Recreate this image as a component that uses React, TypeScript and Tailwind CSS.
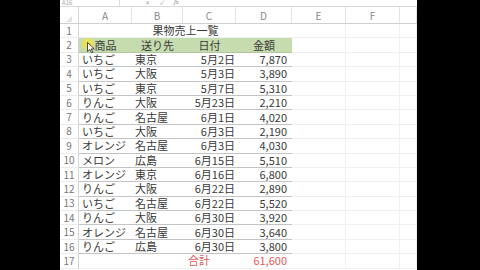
import React from 'react';

const rows = [
  ['いちご', '東京', '5月2日', '7,870'],
  ['いちご', '大阪', '5月3日', '3,890'],
  ['いちご', '東京', '5月7日', '5,310'],
  ['りんご', '大阪', '5月23日', '2,210'],
  ['りんご', '名古屋', '6月1日', '4,020'],
  ['いちご', '大阪', '6月3日', '2,190'],
  ['オレンジ', '名古屋', '6月3日', '4,030'],
  ['メロン', '広島', '6月15日', '5,510'],
  ['オレンジ', '東京', '6月16日', '6,800'],
  ['りんご', '大阪', '6月22日', '2,890'],
  ['いちご', '名古屋', '6月22日', '5,520'],
  ['りんご', '大阪', '6月30日', '3,920'],
  ['オレンジ', '名古屋', '6月30日', '3,640'],
  ['りんご', '広島', '6月30日', '3,800'],
];

const cols = 'grid grid-cols-[19px_53px_51px_53px_56px_54px_54px_17px]';
const font = { fontFamily: '"Noto Sans CJK JP", "Noto Sans", sans-serif' };

function RowNum({ n }: { n: number }) {
  return (
    <div className="flex items-center justify-center text-[10px] text-[#777] border-r border-[#d4d4d4] border-b border-b-[#ececec]">
      {n}
    </div>
  );
}

function Blank() {
  return <div className="border-r border-b border-[#f0f0f0]" />;
}

export default function App() {
  return (
    <div className="w-[480px] h-[270px] bg-black flex overflow-hidden leading-none" style={font}>
      <div className="w-[60px] shrink-0" />
      <div className="w-[357px] shrink-0 bg-white flex flex-col overflow-hidden">
        {/* formula bar, mostly cut off */}
        <div className="h-[7px] flex border-b border-[#d8d8d8] overflow-hidden">
          <div className="w-[60px] border-r border-[#dcdcdc] text-[6px] leading-[6px] text-[#aaa] pl-[2px]">A16</div>
          <div className="w-[15px]" />
          <div className="flex gap-[10px] items-start text-[6px] leading-[6px] text-[#aaa] pl-[10px]">
            <span>✕</span>
            <span>✓</span>
            <span className="italic font-serif text-[#888]">fx</span>
          </div>
        </div>
        {/* column header */}
        <div className={`${cols} h-[17px] border-b border-[#cfcfcf] text-[10px] text-[#888]`}>
          <div className="border-r border-[#d4d4d4] flex items-end justify-center pb-[1px]">
            <svg width="6" height="6" viewBox="0 0 6 6"><path d="M6 0 L6 6 L0 6 Z" fill="#e2e2e2" /></svg>
          </div>
          {['A', 'B', 'C', 'D', 'E', 'F', ''].map((c, i) => (
            <div key={i} className="flex items-center justify-center border-r border-[#e4e4e4] pt-[1px]">
              {c}
            </div>
          ))}
        </div>
        {/* row 1 */}
        <div className={`${cols} h-[14.4px] text-[11px] text-[#3a3a3a]`}>
          <RowNum n={1} />
          <div className="col-span-4 flex items-center justify-center border-b border-[#f0f0f0]">果物売上一覧</div>
          <Blank />
          <Blank />
          <Blank />
        </div>
        {/* row 2 header */}
        <div className={`${cols} h-[14.4px] text-[11px] text-[#3a3a3a]`}>
          <RowNum n={2} />
          {['商品', '送り先', '日付', '金額'].map((t) => (
            <div key={t} className="flex items-center justify-center bg-[#c6dcae] border-b border-[#b3c79f]">
              {t}
            </div>
          ))}
          <Blank />
          <Blank />
          <Blank />
        </div>
        {rows.map((r, i) => (
          <div key={i} className={`${cols} h-[14.4px] text-[11px] text-[#3a3a3a]`}>
            <RowNum n={i + 3} />
            <div className="flex items-center pl-[3px] border-b border-[#c4c4c4] whitespace-nowrap">{r[0]}</div>
            <div className="flex items-center pl-[3px] border-b border-[#c4c4c4] whitespace-nowrap">{r[1]}</div>
            <div className="flex items-center justify-end pr-[1px] border-b border-[#c4c4c4]">{r[2]}</div>
            <div className="flex items-center justify-end pr-[5px] border-b border-[#c4c4c4]">{r[3]}</div>
            <Blank />
            <Blank />
            <Blank />
          </div>
        ))}
        {/* row 17 total */}
        <div className={`${cols} h-[14.4px] text-[11px] text-[#e25a5a]`}>
          <RowNum n={17} />
          <div className="border-b border-[#f0f0f0]" />
          <div className="border-b border-[#f0f0f0]" />
          <div className="flex items-center pl-[5px] border-b border-[#f0f0f0]">合計</div>
          <div className="flex items-center justify-end pr-[5px] border-b border-[#f0f0f0]">61,600</div>
          <Blank />
          <Blank />
          <Blank />
        </div>
      </div>
      <div className="flex-1" />
      {/* mouse pointer with highlight */}
      <div className="absolute left-[82px] top-[38px] w-[12px] h-[12px] rounded-full bg-[#f5e23a] opacity-70" />
      <svg className="absolute left-[87px] top-[42px]" width="8" height="12" viewBox="0 0 8 12">
        <path d="M0.5 0.5 L0.5 9.5 L2.8 7.4 L4.5 11 L5.8 10.4 L4.2 6.9 L7.3 6.9 Z" fill="#fff" stroke="#222" strokeWidth="0.8" />
      </svg>
    </div>
  );
}
